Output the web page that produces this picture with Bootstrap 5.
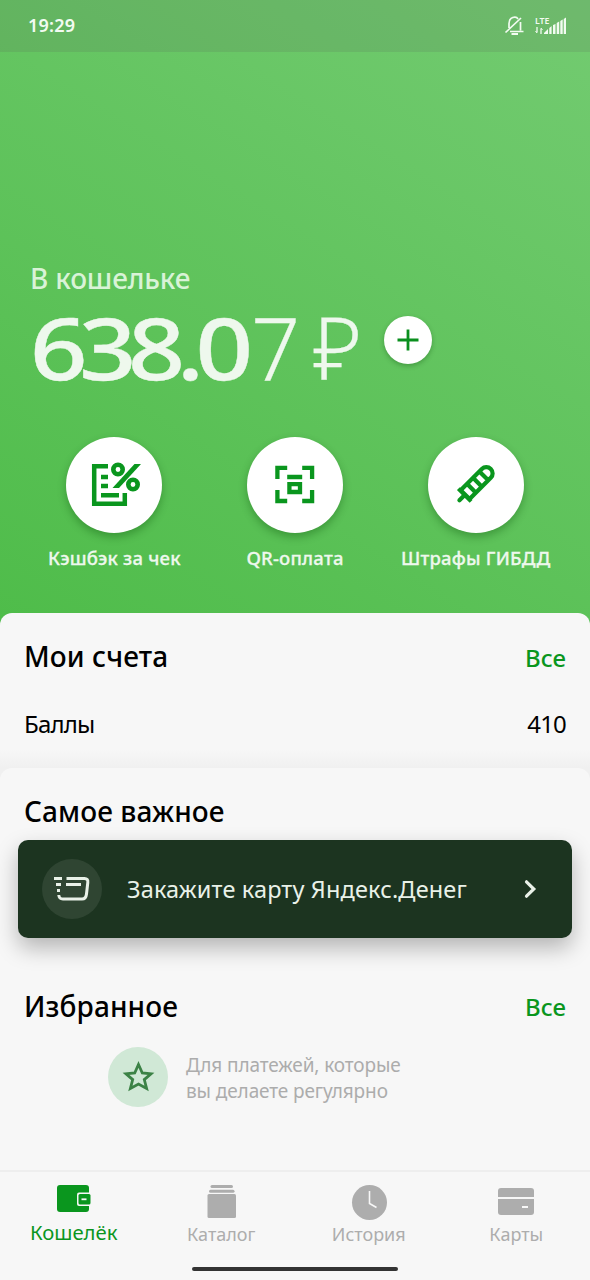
<!DOCTYPE html>
<html lang="ru">
<head>
<meta charset="utf-8">
<meta name="viewport" content="width=device-width, initial-scale=1">
<title>Кошелёк</title>
<link href="https://cdn.jsdelivr.net/npm/bootstrap@5.3.0/dist/css/bootstrap.min.css" rel="stylesheet">
<style>
body{font-family:"Noto Sans",sans-serif;background:#f7f7f7;color:#000;overflow:hidden}
svg{display:block;flex:none}
.screen{width:590px;height:1280px;background:linear-gradient(32deg,#4ebc49 0%,#73cb71 100%) top/590px 640px no-repeat,#f7f7f7}
.statusbar{height:52px;background:rgba(86,84,84,.15);padding:0 23px 0 28px;color:#f2fbf1}
.clock{font:600 18px/51px "Noto Sans",sans-serif;letter-spacing:.2px}
.hero{height:561px;color:#eef8ed}
.wallet-label{font-size:28px;line-height:32px;height:32px;margin:210px 0 0 30px;color:#d9f3d7;font-weight:500;letter-spacing:-.15px}
.amount{height:84px;margin:11px 0 0 30px;line-height:84px;font-size:86px}
.amount-main{display:block;width:221px;font-weight:500;letter-spacing:-7.400px;transform:scaleX(1.17);transform-origin:0 50%;-webkit-text-stroke:.4px #eef8ed}
.amount-cents{font-weight:300;-webkit-text-stroke:.3px #eef8ed}
.currency{margin-left:13px}
.plus{width:48px;height:48px;border-radius:50%;background:#fff;box-shadow:0 2px 5px rgba(0,60,0,.3);margin:0 0 15px 22px}
.actions{padding:0 24px;margin-top:48px}
.disc{width:96px;height:96px;border-radius:50%;background:#fff;box-shadow:0 4px 9px rgba(0,70,0,.33)}
.action-label{font-size:18.500px;line-height:24px;margin-top:13px;font-weight:500;letter-spacing:.2px;white-space:nowrap;-webkit-text-stroke:.3px #eef8ed}
.sheet{background:#f7f7f7;border-radius:12px 12px 0 0;padding:0 24px}
.accounts{height:155px;background:linear-gradient(#f7f7f7 88%,#f0f0f0)}
.accounts-wrap{background:#f0f0f0}
.accounts-wrap .important{height:402px}
.heading{font-size:28px;line-height:38px;height:40px;font-weight:500;letter-spacing:.1px;white-space:nowrap}
.all{font-size:24px;line-height:41px;height:40px;font-weight:500;color:#0a961e}
.row-text{font-size:24px;line-height:30px;letter-spacing:-.8px}
.promo{height:98px;margin:0 -6px;border-radius:10px;background:#1c3420;color:#e9f1e8;padding:0 34px 0 24px;box-shadow:0 10px 22px rgba(0,0,0,.27);font-size:23.500px;letter-spacing:.15px;white-space:nowrap}
.promo-title{padding:2px 0 0 1px}
.promo-disc{width:60px;height:60px;border-radius:50%;background:#2f4532}
.favorites{margin:21px 0 0 84px}
.favorites-head .heading{line-height:40px}
.favorites-head .all{line-height:42px}
.fav-disc{width:60px;height:60px;border-radius:50%;background:#d0e8d6}
.hint{font-size:19px;line-height:26px;color:#acacac;letter-spacing:-.1px;padding-top:5px;margin-left:18px;white-space:nowrap}
.tabs{height:110px;border-top:2px solid #eee;background:#f7f7f7}
.tab{width:147.5px;color:#adadad;font-size:18px;line-height:30px}
.tab-ico{height:47px;padding-top:13px}
.tab.current{color:#0a961e;font-size:20.300px;line-height:27px}
.homebar{width:206px;height:4px;border-radius:2px;background:#333;margin-top:18px}
</style>
</head>
<body>
<div class="screen d-flex flex-column">
  <header class="statusbar d-flex justify-content-between">
    <span class="clock">19:29</span>
    <svg width="64" height="52" viewBox="503 0 64 52" fill="none" stroke="#f2fbf1" stroke-width="1.700">
      <path d="M505.500 32.500 521 18M509 28V23.500C509 17 516 15.500 518 19M520.500 22V30.500M510 31.500H523.500"/>
      <path d="M511.500 34H518" stroke-width="2"/>
      <path d="M537 27v5.500M541 34v-5.500" stroke-width="1.300"/>
      <path d="M535.500 31 537 33M541 28 542.500 30" stroke-width="1"/>
      <path d="M544 34v-1l4-4v5zM549.300 34v-6l2.300-2v8zM553 34v-9l2.500-1v10zM556.700 34V23l2.500-1.500v12.500zM560.300 34V21l2.400-1.500v14.500zM563.700 34V19l2.300-1.500v16.500z" fill="#f2fbf1" stroke="none"/>
      <text x="535" y="23.500" font-size="9.500" font-weight="600" fill="#f2fbf1" stroke="none" textLength="14.500" lengthAdjust="spacingAndGlyphs">LTE</text>
    </svg>
  </header>

  <section class="hero d-flex flex-column">
    <div class="wallet-label">В кошельке</div>
    <div class="amount d-flex align-items-center">
      <span class="amount-main">638.0</span><span class="amount-cents">7</span>
      <span class="amount-cents currency">₽</span>
      <span class="plus d-flex align-items-center justify-content-center">
        <svg width="24" height="24" viewBox="0 0 24 24" stroke="#0a8f1e" stroke-width="2.800"><path d="M1.500 12h21M12 1.500v21"/></svg>
      </span>
    </div>
    <div class="actions row g-0 text-center">
      <div class="col d-flex flex-column align-items-center">
        <div class="disc"><svg width="96" height="96" viewBox="66 437 96 96" fill="none" stroke="#0a961e" stroke-width="4.500">
          <path d="M108 466.200H94.200V503.800H124.800V493M101 477H108M101 486H108M101 495.300H119"/>
          <path d="M112.500 488H119L141 464H134.500Z" fill="#0a961e" stroke="none"/><circle cx="118" cy="469.500" r="4.700" stroke-width="4.600"/><circle cx="133" cy="484.500" r="4.700" stroke-width="4.600"/>
        </svg></div>
        <div class="action-label">Кэшбэк за чек</div>
      </div>
      <div class="col d-flex flex-column align-items-center">
        <div class="disc"><svg width="96" height="96" viewBox="246.800 437 96 96" fill="none" stroke="#0a961e" stroke-width="4.300">
          <path d="M287 467.800H277.200V479M302 467.800H311.900V479M277.200 490V501H287M302 501H311.900V490M287 477H302M289.200 484.200H299.800V492H289.200Z"/>
        </svg></div>
        <div class="action-label">QR-оплата</div>
      </div>
      <div class="col d-flex flex-column align-items-center">
        <div class="disc"><svg width="96" height="96" viewBox="427.500 437 96 96">
          <g transform="translate(475.200 484) rotate(45)" fill="none" stroke="#0a961e" stroke-width="4.200">
            <path d="M-6.300 15V-15A6.300 6.300 0 0 1 6.300-15V15ZM-6.300-11.500H6.300M-6.300-2.500H6.300M-6.300 6H6.300"/><path d="M-9 15.500H9" stroke-width="4"/><path d="M0 17V23" stroke-linecap="round"/>
          </g></svg></div>
        <div class="action-label">Штрафы ГИБДД</div>
      </div>
    </div>
  </section>

  <main>
    <section class="sheet accounts">
      <div class="d-flex justify-content-between pt-4"><h2 class="heading m-0">Мои счета</h2><a class="all text-decoration-none">Все</a></div>
      <div class="row-text d-flex justify-content-between mt-4 pt-2"><span>Баллы</span><span>410</span></div>
    </section>
    <div class="accounts-wrap">
      <section class="sheet important">
        <div class="pt-4 pb-2"><h2 class="heading m-0">Самое важное</h2></div>
        <div class="promo d-flex align-items-center">
          <span class="promo-disc"><svg width="60" height="60" viewBox="42 859 60 60" fill="none" stroke="#e9f1e8" stroke-width="3">
            <path d="M54 878.500H62M56 884.500H61M57 890.500H60"/><path d="M66.500 878.500H84.500Q88.300 878.500 87.800 882.500L86.500 894Q86 899 82 899H63Q59 899 58.800 895M66 884.500H81"/>
          </svg></span>
          <span class="promo-title ms-4">Закажите карту Яндекс.Денег</span>
          <svg class="ms-auto" width="14" height="20" viewBox="0 0 14 20" fill="none" stroke="#e9f1e8" stroke-width="3.200" stroke-linecap="round"><path d="M2.500 2.800l7.300 7.200L2.500 17.200"/></svg>
        </div>
        <div class="favorites-head d-flex justify-content-between mt-5"><h2 class="heading m-0">Избранное</h2><a class="all text-decoration-none">Все</a></div>
        <div class="favorites d-flex">
          <span class="fav-disc"><svg width="60" height="60" viewBox="0 0 60 60" fill="none" stroke="#3c8246" stroke-width="2.800"><path d="M30.500 17.500 34.300 26 43 26.800 36.300 32.600 38.600 41.500 30.500 37 22.400 41.500 24.700 32.600 18 26.800 26.700 26Z"/></svg></span>
          <div class="hint">Для платежей, которые<br>вы делаете регулярно</div>
        </div>
      </section>
    </div>
  </main>

  <nav class="tabs d-flex flex-column">
    <div class="d-flex text-center">
      <div class="tab current"><div class="tab-ico d-flex justify-content-center"><svg width="34" height="28" viewBox="0 0 34 28"><rect width="32" height="27" rx="3" fill="#0a961e"/><rect x="20" y="7.500" width="14" height="13.500" rx="2" fill="#f7f7f7"/><rect x="21.500" y="9" width="12" height="10.500" rx="1.500" fill="#0a961e"/><path d="M24.500 14.300h5" stroke="#f7f7f7" stroke-width="1.800"/></svg></div>Кошелёк</div>
      <div class="tab"><div class="tab-ico d-flex justify-content-center"><svg width="30" height="34" viewBox="0 0 30 34" fill="#adadad"><rect x="4.500" y="0" width="22.500" height="3" rx="1.500"/><rect x="3" y="4.700" width="25.500" height="3" rx="1.500"/><rect x="1.500" y="9" width="28.500" height="24" rx="1.500"/></svg></div>Каталог</div>
      <div class="tab"><div class="tab-ico d-flex justify-content-center"><svg width="36" height="36" viewBox="0 0 36 36"><circle cx="18.500" cy="17.500" r="17.500" fill="#adadad"/><path d="M18.500 6V18.500L25.500 22.500" fill="none" stroke="#f7f7f7" stroke-width="1.600"/></svg></div>История</div>
      <div class="tab"><div class="tab-ico d-flex justify-content-center"><svg width="36" height="32" viewBox="0 0 36 32"><rect y="3" width="36" height="27" rx="3" fill="#adadad"/><path d="M0 13h36" stroke="#f7f7f7" stroke-width="2"/><path d="M24 22h6" stroke="#f7f7f7" stroke-width="2"/></svg></div>Карты</div>
    </div>
    <div class="homebar mx-auto"></div>
  </nav>
</div>
<script src="https://cdn.jsdelivr.net/npm/bootstrap@5.3.0/dist/js/bootstrap.bundle.min.js"></script>
</body>
</html>
